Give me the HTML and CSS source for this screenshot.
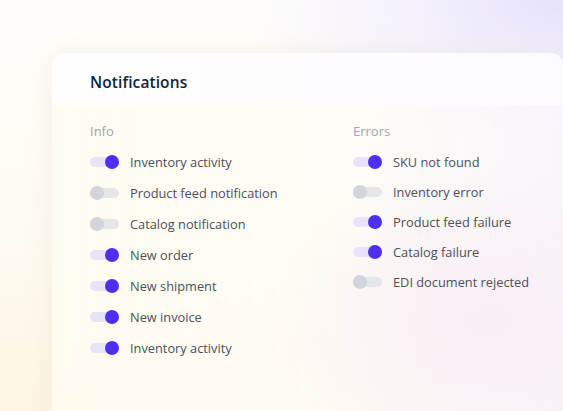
FILE: index.html
```html
<!DOCTYPE html>
<html>
<head>
<meta charset="utf-8">
<link rel="stylesheet" href="styles.css">
</head>
<body>
<div class="card">
  <div class="card-header"><h1 class="title">Notifications</h1></div>
  <div class="card-body">
    <section class="group group-info">
      <h2 class="group-title">Info</h2>
      <ul class="list">
        <li class="row"><span class="toggle on"></span><span class="label">Inventory activity</span></li>
        <li class="row"><span class="toggle"></span><span class="label">Product feed notification</span></li>
        <li class="row"><span class="toggle"></span><span class="label">Catalog notification</span></li>
        <li class="row"><span class="toggle on"></span><span class="label">New order</span></li>
        <li class="row"><span class="toggle on"></span><span class="label">New shipment</span></li>
        <li class="row"><span class="toggle on"></span><span class="label">New invoice</span></li>
        <li class="row"><span class="toggle on"></span><span class="label">Inventory activity</span></li>
      </ul>
    </section>
    <section class="group group-errors">
      <h2 class="group-title">Errors</h2>
      <ul class="list">
        <li class="row"><span class="toggle on"></span><span class="label">SKU not found</span></li>
        <li class="row"><span class="toggle"></span><span class="label">Inventory error</span></li>
        <li class="row"><span class="toggle on"></span><span class="label">Product feed failure</span></li>
        <li class="row"><span class="toggle on"></span><span class="label">Catalog failure</span></li>
        <li class="row"><span class="toggle"></span><span class="label">EDI document rejected</span></li>
      </ul>
    </section>
  </div>
</div>
</body>
</html>
```
FILE: styles.css
```css
html, body {
  margin: 0;
  padding: 0;
  height: 100%;
  overflow: hidden;
}
body {
  font-family: "Open Sans", "Liberation Sans", sans-serif;
  background:
    radial-gradient(ellipse 320px 160px at 100% 0%, #e6e1fb 0%, rgba(236,232,252,0.6) 45%, rgba(255,255,255,0) 100%),
    linear-gradient(180deg, #fefdfb 0%, #fdfaf0 60%, #fcf5e2 100%);
  padding: 53px 0 0 52px;
  box-sizing: border-box;
}
.card {
  width: 511px;
  height: 100%;
  border-radius: 12px 12px 0 0;
  overflow: hidden;
  background:
    radial-gradient(ellipse 220px 160px at 85% 75%, rgba(248,236,244,0.9) 0%, rgba(248,238,244,0) 100%),
    linear-gradient(90deg, rgba(254,251,240,0.9) 0%, rgba(253,251,246,0.85) 60%, rgba(248,245,252,0.9) 100%);
  box-shadow: 0 0 24px rgba(220, 210, 190, 0.25);
}
.card-header {
  height: 52px;
  display: flex;
  align-items: center;
  padding-left: 38px;
  background: linear-gradient(90deg, #fefefe 0%, #fdfdff 60%, #fbfbff 100%);
}
.title {
  margin: 0;
  font-size: 15.5px;
  font-weight: 600;
  color: #11243a;
  letter-spacing: 0.1px;
  position: relative;
  top: 3px;
}
.card-body {
  display: flex;
  padding: 16px 0 0 38px;
}
.group {
  width: 263px;
  flex: none;
}
.group-title {
  margin: 0;
  height: 20px;
  line-height: 20px;
  font-size: 13px;
  font-weight: 400;
  color: #a1a6b0;
}
.list {
  list-style: none;
  margin: 6px 0 0;
  padding: 0;
}
.group-info .list {
  margin-top: 5px;
}
.row {
  display: flex;
  align-items: center;
  height: 31px;
}
.group-errors .row {
  height: 30px;
}
.toggle {
  position: relative;
  width: 29px;
  height: 10px;
  border-radius: 5px;
  background: #e4e6ea;
  margin-right: 11px;
  flex: none;
}
.toggle::after {
  content: "";
  position: absolute;
  left: 0;
  top: -2px;
  width: 14px;
  height: 14px;
  border-radius: 50%;
  background: #d2d5db;
}
.toggle.on {
  background: #e7e3fb;
}
.toggle.on::after {
  left: 15px;
  background: #4d2ff0;
}
.label {
  font-size: 12.8px;
  color: #4b505c;
  line-height: 20px;
}
```
